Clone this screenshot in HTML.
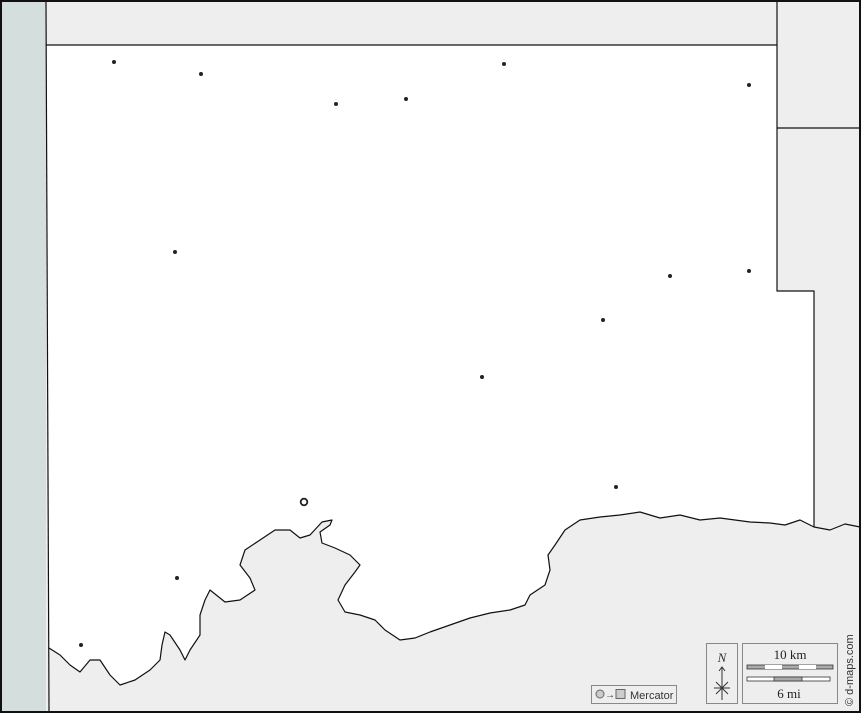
<!DOCTYPE html>
<html><head><style>
body{margin:0;width:861px;height:713px;overflow:hidden;background:#fff}
svg{display:block}
</style></head><body>
<svg width="861" height="713" viewBox="0 0 861 713" style="font-family:'Liberation Sans',sans-serif">
<rect x="0" y="0" width="861" height="713" fill="#eeeeee"/>
<rect x="2" y="2" width="44" height="709" fill="#d4dedd"/>
<path d="M46,45 L777,45 L777,291 L814,291 L814,527 L800,520 L785,525 L770,523 L750,522 L735,520 L720,518 L700,520 L680,515 L660,518 L640,512 L620,515 L600,517 L580,520 L565,530 L555,545 L548,555 L550,570 L545,585 L530,595 L525,605 L510,610 L490,613 L470,618 L450,625 L430,632 L415,638 L400,640 L385,630 L375,620 L360,615 L345,612 L338,600 L345,585 L355,572 L360,565 L350,555 L335,548 L322,543 L320,532 L330,525 L332,520 L322,522 L310,535 L300,538 L290,530 L275,530 L260,540 L245,550 L240,565 L250,578 L255,590 L240,600 L225,602 L210,590 L205,600 L200,615 L200,635 L190,650 L185,660 L180,650 L170,635 L165,632 L162,645 L160,660 L150,670 L135,680 L120,685 L110,675 L100,660 L90,660 L80,672 L70,665 L60,655 L49,648 Z" fill="#fff" stroke="none"/>
<g fill="none" stroke="#111" stroke-width="1.2" stroke-linejoin="round">
<path d="M46,2 L49,711"/>
<path d="M46,45 L777,45 L777,291 L814,291 L814,527"/>
<path d="M777,2 L777,45 M777,128 L859,128"/>
<path d="M860,527 L845,524 L830,530 L814,527 L800,520 L785,525 L770,523 L750,522 L735,520 L720,518 L700,520 L680,515 L660,518 L640,512 L620,515 L600,517 L580,520 L565,530 L555,545 L548,555 L550,570 L545,585 L530,595 L525,605 L510,610 L490,613 L470,618 L450,625 L430,632 L415,638 L400,640 L385,630 L375,620 L360,615 L345,612 L338,600 L345,585 L355,572 L360,565 L350,555 L335,548 L322,543 L320,532 L330,525 L332,520 L322,522 L310,535 L300,538 L290,530 L275,530 L260,540 L245,550 L240,565 L250,578 L255,590 L240,600 L225,602 L210,590 L205,600 L200,615 L200,635 L190,650 L185,660 L180,650 L170,635 L165,632 L162,645 L160,660 L150,670 L135,680 L120,685 L110,675 L100,660 L90,660 L80,672 L70,665 L60,655 L49,648"/>
</g>
<rect x="1" y="1" width="859" height="711" fill="none" stroke="#111" stroke-width="2"/>
<g fill="#222">
<circle cx="114" cy="62" r="2"/><circle cx="201" cy="74" r="2"/><circle cx="336" cy="104" r="2"/><circle cx="406" cy="99" r="2"/><circle cx="504" cy="64" r="2"/><circle cx="749" cy="85" r="2"/><circle cx="175" cy="252" r="2"/><circle cx="670" cy="276" r="2"/><circle cx="749" cy="271" r="2"/><circle cx="603" cy="320" r="2"/><circle cx="482" cy="377" r="2"/><circle cx="616" cy="487" r="2"/><circle cx="177" cy="578" r="2"/><circle cx="81" cy="645" r="2"/>
</g>
<circle cx="304" cy="502" r="3.3" fill="#fff" stroke="#222" stroke-width="1.8"/>
<rect x="591.5" y="685.5" width="85" height="18" fill="#eee" stroke="#888"/>
<circle cx="600" cy="694" r="4" fill="#ccc" stroke="#666"/>
<text x="605" y="698" font-size="10" fill="#333">→</text>
<rect x="616" y="689.5" width="9" height="9" fill="#ccc" stroke="#666"/>
<text x="630" y="699" font-size="11" fill="#333">Mercator</text>
<rect x="706.5" y="643.5" width="31" height="60" fill="#eee" stroke="#888"/>
<text x="722" y="662" font-size="13" font-style="italic" text-anchor="middle" style="font-family:'Liberation Serif',serif" fill="#333">N</text>
<path d="M722,668 L722,700 M719,671 L722,667 L725,671 M714,688 L730,688 M716,682 L728,694 M728,682 L716,694" stroke="#333" fill="none"/>
<rect x="742.5" y="643.5" width="95" height="60" fill="#eee" stroke="#888"/>
<text x="790" y="659" font-size="13" text-anchor="middle" style="font-family:'Liberation Serif',serif" fill="#222">10 km</text>
<rect x="747" y="665" width="86" height="4" fill="#aaa" stroke="#333" stroke-width="0.8"/>
<rect x="765" y="665" width="17" height="4" fill="#fff"/><rect x="799" y="665" width="17" height="4" fill="#fff"/>
<rect x="747" y="677" width="83" height="4" fill="#fff" stroke="#333" stroke-width="0.8"/>
<rect x="774" y="677" width="28" height="4" fill="#aaa" stroke="#333" stroke-width="0.8"/>
<text x="789" y="698" font-size="13" text-anchor="middle" style="font-family:'Liberation Serif',serif" fill="#222">6 mi</text>
<text transform="translate(853,706) rotate(-90)" font-size="11" fill="#333">© d-maps.com</text>
</svg>
</body></html>
